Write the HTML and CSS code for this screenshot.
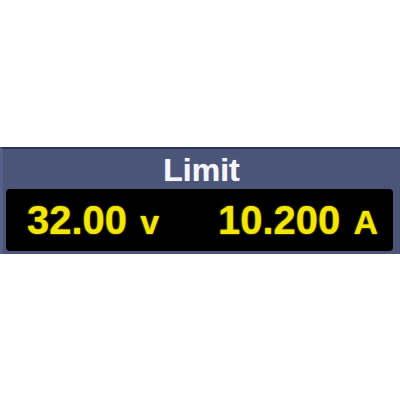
FILE: index.html
```html
<!DOCTYPE html>
<html lang="en">
<head>
    <meta charset="UTF-8">
    <title>Limit</title>
    <link rel="stylesheet" href="styles.css">
</head>
<body>
    <section class="panel">
        <h2 class="panel-title">Limit</h2>
        <div class="readout">
            <span class="value">32.00 <small class="unit">v</small></span>
            <span class="value">10.200 <small class="unit">A</small></span>
        </div>
    </section>
</body>
</html>
```

FILE: styles.css
```css
*{
    padding: 0;
    margin: 0;
    box-sizing: border-box;
}

body{
    background: white;
    height: 400px;
    display: flex;
    flex-direction: column;
    justify-content: center;
    font-family: "Liberation Sans", Arial, sans-serif;
}

.panel{
    background: #4b5578;
    border-top: 2px solid #2c3350;
    border-left: 3px solid #56618a;
    padding: 0 7px 3px 3px;
}

.panel-title{
    height: 40px;
    line-height: 42px;
    text-align: center;
    color: #f4f5fa;
    font-size: 32px;
    font-weight: bold;
    padding-left: 4px;
    text-shadow: 0 0 1px rgba(255,255,255,0.6);
}

.readout{
    height: 62px;
    background: black;
    border-radius: 4px;
    display: flex;
    align-items: center;
    justify-content: space-between;
    padding: 2px 15px 0 21px;
}

.value{
    color: #f3e600;
    font-size: 40px;
    font-weight: bold;
    text-shadow: 0 0 2px rgba(243,230,0,0.7);
}

.unit{
    font-size: 34px;
    margin-left: 2px;
}
```
